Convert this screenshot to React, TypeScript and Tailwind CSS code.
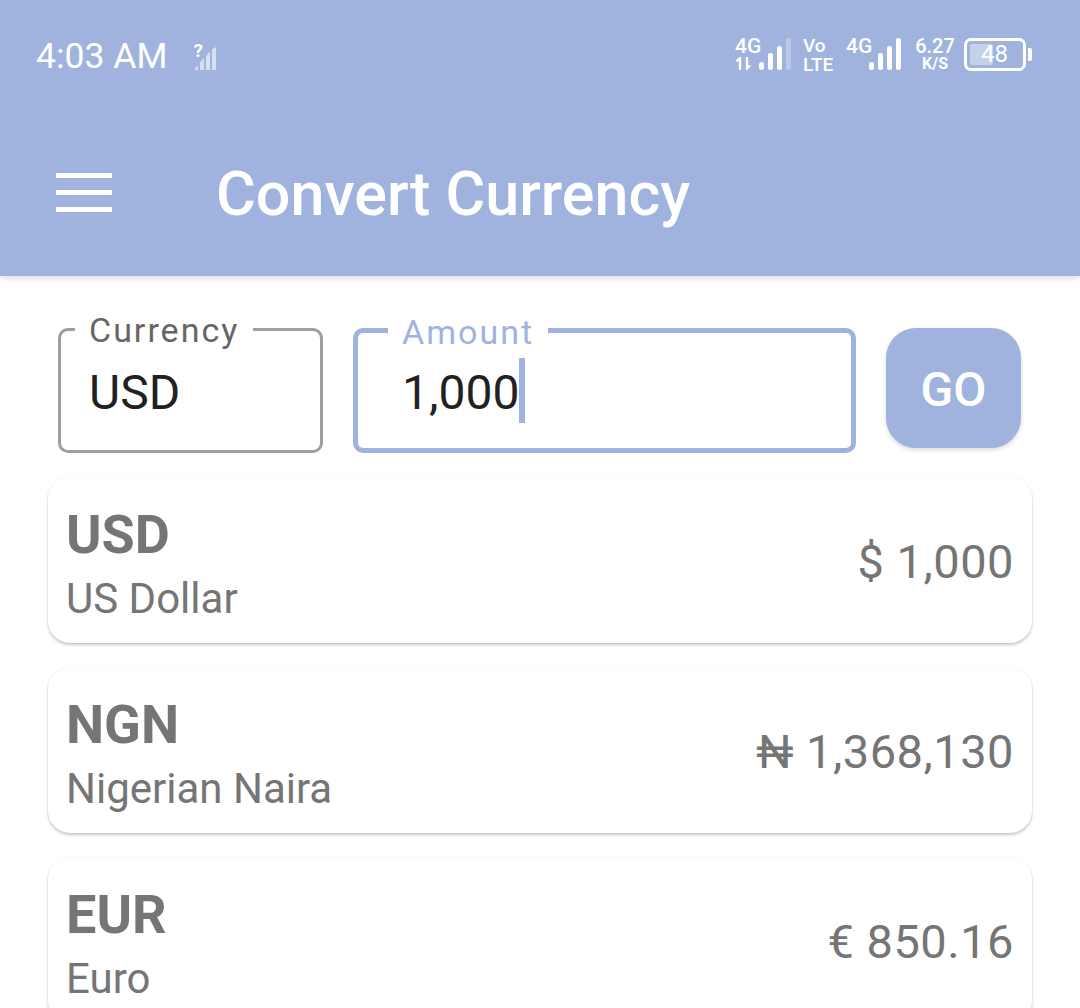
const rows = [
  { code: "USD", name: "US Dollar", value: "$ 1,000" },
  { code: "NGN", name: "Nigerian Naira", value: "₦ 1,368,130" },
  { code: "EUR", name: "Euro", value: "€ 850.16" },
];

const SignalBars = ({ dim }: { dim?: boolean }) => (
  <svg width="32" height="32" viewBox="0 0 32 32" className="block shrink-0">
    <rect x="0" y="24" width="5" height="8" rx="2.5" fill="#fff" />
    <rect x="9" y="15" width="5" height="17" rx="2" fill="#fff" />
    <rect x="18" y="8" width="5" height="24" rx="2" fill="#fff" />
    <rect x="27" y="0" width="5" height="32" rx="2" fill="#fff" fillOpacity={dim ? 0.3 : 1} />
  </svg>
);

const NoSimSignal = () => (
  <div className="relative h-[27px] w-[24px]">
    <svg width="23" height="23" viewBox="0 0 23 23" className="absolute bottom-0 right-0">
      <path d="M1 23 L5 18 V23 Z M7 23 V15.5 L11 11 V23 Z M13 23 V9 L17 4.5 V23 Z M19 23 V2.5 L23 0 V23 Z" fill="#fff" fillOpacity="0.6" />
    </svg>
    <span className="absolute left-[1px] top-[-3px] text-[19px] font-bold leading-[22px]">?</span>
  </div>
);

const DataArrows = () => (
  <svg width="15" height="13" viewBox="0 0 15 13" className="block">
    <path d="M4 13 V1 L0.5 4.5" fill="none" stroke="#fff" strokeWidth="2.4" />
    <path d="M11 0 V11.5 L14 8.5" fill="none" stroke="#fff" strokeWidth="2.4" />
  </svg>
);

const StatusBar = () => (
  <div className="flex h-[110px] items-center justify-between pb-[2px] pl-[36px] pr-[48px] text-white">
    <div className="flex items-center gap-[25px] pt-[5px]">
      <span className="text-[35.5px] leading-none">4:03 AM</span>
      <NoSimSignal />
    </div>
    <div className="flex items-center">
      <div className="flex h-[32px] w-[23px] flex-col text-[21px] font-medium leading-[17px]">
        <span className="-ml-[1px]">4G</span>
        <div className="mt-[2px]">
          <DataArrows />
        </div>
      </div>
      <SignalBars dim />
      <div className="ml-[12px] flex h-[32px] w-[30px] flex-col text-[19px] font-medium leading-[16px]">
        <span>Vo</span>
        <span className="mt-[3px]">LTE</span>
      </div>
      <div className="ml-[13px] h-[32px] w-[23px] text-[21px] font-medium leading-[17px]">4G</div>
      <SignalBars />
      <div className="ml-[15px] flex h-[32px] w-[38px] flex-col items-center text-[20px] font-medium leading-[16px]">
        <span>6.27</span>
        <span className="mt-[3px] text-[16px] font-bold leading-[13px]">K/S</span>
      </div>
      <div className="relative ml-[10px] flex h-[33px] w-[62px] items-center justify-center rounded-[7px] border-[3px] border-white">
        <div className="absolute bottom-[3px] left-[3px] top-[3px] w-[23px] rounded-[2px] bg-white/40" />
        <span className="relative mr-[1px] text-[24px] leading-none">48</span>
      </div>
      <div className="ml-[2px] h-[13px] w-[4px] rounded-r-[2px] bg-white" />
    </div>
  </div>
);

const AppBar = () => (
  <div className="flex h-[166px] items-center pb-[1px] pl-[56px] text-white">
    <div className="flex w-[56px] flex-col gap-[12px]">
      <div className="h-[5px] bg-white" />
      <div className="h-[5px] bg-white" />
      <div className="h-[5px] bg-white" />
    </div>
    <h1 className="ml-[104px] pt-[4px] text-[61px] font-medium leading-none">Convert Currency</h1>
  </div>
);

const CurrencyField = () => (
  <fieldset className="h-[147px] w-[265px] rounded-[10px] border-[3px] border-[#9e9e9e] pl-[14px]">
    <legend className="px-[14px] pb-[4px] pt-[5px] text-[34px] leading-[38px] tracking-[2px] text-[#666666]">Currency</legend>
    <div className="mt-[13px] pl-[14px] text-[48px] leading-[54px] text-[#212121]">USD</div>
  </fieldset>
);

const AmountField = () => (
  <fieldset className="h-[147px] w-[503px] rounded-[10px] border-[5px] border-[#9fb3de] pl-[30px]">
    <legend className="px-[14px] pb-[4px] pt-[7px] text-[34px] leading-[38px] tracking-[2px] text-[#9fb3de]">Amount</legend>
    <div className="mt-[3px] flex items-center pl-[14px] text-[48px] leading-[54px] text-[#212121]">
      <span className="pt-[5px]">1,000</span>
      <span className="h-[65px] w-[6px] bg-[#9fb3de]" />
    </div>
  </fieldset>
);

const CurrencyRow = ({ code, name, value }: { code: string; name: string; value: string }) => (
  <div className="flex h-[166px] shrink-0 items-center justify-between rounded-[22px] bg-white pl-[18px] pr-[18px] shadow-[0_2px_3px_rgba(0,0,0,0.22),0_0_2px_rgba(0,0,0,0.06)]">
    <div className="flex flex-col pt-[8px] text-[#757575]">
      <span className="text-[54px] font-bold leading-[58px]">{code}</span>
      <span className="mt-[12px] text-[42px] leading-[46px]">{name}</span>
    </div>
    <span className="pt-[3px] text-[47px] leading-none tracking-[0.5px] text-[#757575]">{value}</span>
  </div>
);

export default function App() {
  return (
    <div className="flex h-[1008px] flex-col overflow-hidden bg-white font-['Roboto',sans-serif]">
      <header className="shrink-0 bg-[#9fb3de] shadow-[0_2px_6px_rgba(0,0,0,0.15)]">
        <StatusBar />
        <AppBar />
      </header>

      <div className="flex gap-[30px] pl-[58px] pr-[59px] pt-[30px]">
        <CurrencyField />
        <AmountField />
        <button className="mt-[22px] flex h-[120px] w-[135px] items-center justify-center rounded-[30px] bg-[#9fb3de] pt-[4px] text-[48px] font-medium text-white shadow-[0_2px_4px_rgba(0,0,0,0.15)]">
          GO
        </button>
      </div>

      <div className="flex flex-col gap-[24px] px-[48px] pt-[24px]">
        {rows.map((row) => (
          <CurrencyRow key={row.code} {...row} />
        ))}
      </div>
    </div>
  );
}
